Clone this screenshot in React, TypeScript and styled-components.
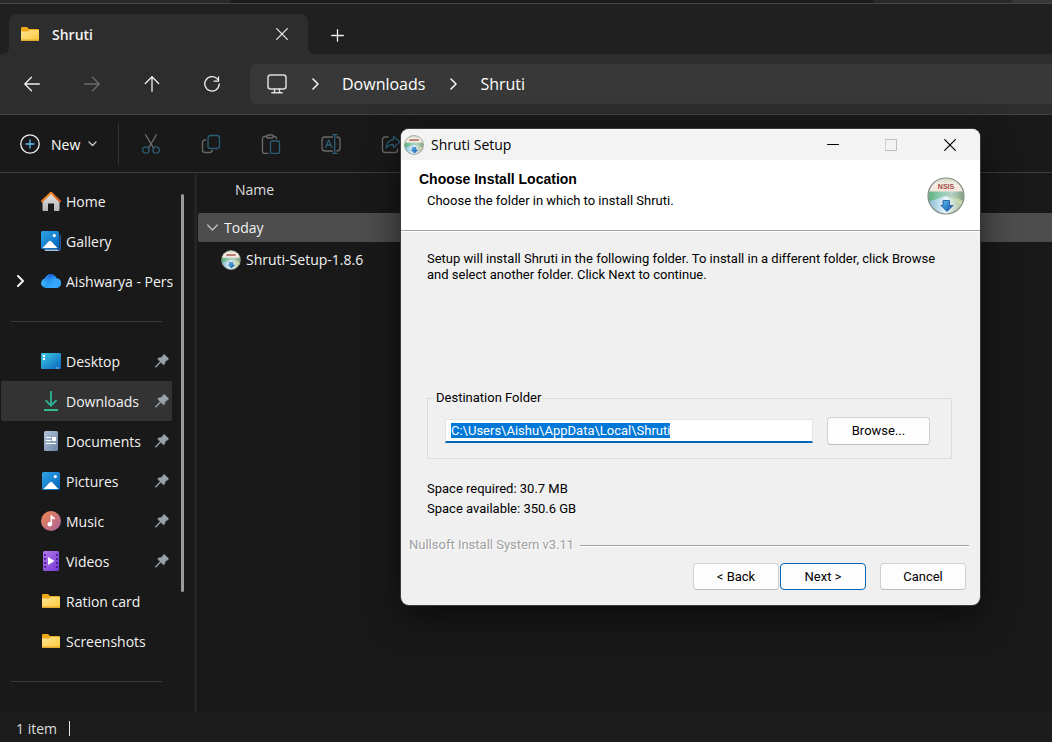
import { useEffect, useRef } from "react";
import type { ReactNode } from "react";
import styled, { createGlobalStyle, css } from "styled-components";

const uiFont = `"Open Sans", "Noto Sans", sans-serif`;
const dialogFont = `Roboto, "Noto Sans", sans-serif`;

const GlobalStyle = createGlobalStyle`
  *, *::before, *::after { box-sizing: border-box; }
  body {
    margin: 0;
    background: #191919;
    color: #f2f2f2;
    font: 14px/20px ${uiFont};
  }
  button, input { font: inherit; color: inherit; }
  svg { display: block; flex: none; }
`;

/* ---------- Explorer window ---------- */

const Explorer = styled.div`
  position: relative;
  display: flex;
  flex-direction: column;
  min-height: 100vh;
  overflow: hidden;
`;

const BackWindows = styled.div`
  display: flex;
  justify-content: space-between;
  height: 4px;
  background: #1b1b1b;
  border-bottom: 1px solid #444;
`;

const BackPane = styled.div<{ $share: number; $edge?: boolean }>`
  width: ${(p) => p.$share}%;
  background: #2a2a2a;
  border-right: ${(p) => (p.$edge ? "40px solid #383838" : "none")};
`;

const TabStrip = styled.div`
  display: flex;
  align-items: flex-end;
  height: 50px;
  padding-left: 9px;
  background: #202020;
`;

const Tab = styled.div`
  position: relative;
  display: flex;
  align-items: center;
  gap: 12px;
  width: 299px;
  height: 40px;
  padding: 0 18px 0 11px;
  border-radius: 8px 8px 0 0;
  background: #2d2d2d;
  font-weight: 600;

  &::before,
  &::after {
    content: "";
    position: absolute;
    bottom: 0;
    width: 6px;
    height: 6px;
  }
  &::before {
    right: 100%;
    background: radial-gradient(circle at 0 0, transparent 6px, #2d2d2d 6px);
  }
  &::after {
    left: 100%;
    background: radial-gradient(circle at 100% 0, transparent 6px, #2d2d2d 6px);
  }
`;

const TabTitle = styled.span`
  flex: 1;
  padding-top: 2px;
`;

const PlainButton = styled.button<{ $w: number; $h: number }>`
  display: flex;
  align-items: center;
  justify-content: center;
  flex: none;
  width: ${(p) => p.$w}px;
  height: ${(p) => p.$h}px;
  padding: 0;
  border: 0;
  background: none;
`;

const NavBar = styled.nav`
  display: flex;
  align-items: center;
  height: 61px;
  padding-left: 2px;
  background: #2d2d2d;
  border-bottom: 1px solid #414141;
`;

const AddressBar = styled.div`
  display: flex;
  align-items: center;
  flex: 1;
  height: 40px;
  margin-left: 8px;
  padding-left: 17px;
  border-radius: 6px 0 0 6px;
  background: #383838;
  font-size: 16px;
`;

const Crumb = styled.a`
  color: #fff;
  text-decoration: none;
`;

const CrumbArrow = styled.span`
  display: flex;
  justify-content: center;
  width: 55px;
`;

const CommandBar = styled.div`
  display: flex;
  align-items: center;
  height: 58px;
  padding-left: 20px;
  border-bottom: 1px solid #3c3c3c;
`;

const NewButton = styled.button`
  display: flex;
  align-items: center;
  height: 40px;
  padding: 0;
  border: 0;
  background: none;
  color: #fff;

  span {
    margin: 0 8px 0 11px;
    padding-top: 2px;
  }
`;

const ToolDivider = styled.span`
  width: 1px;
  height: 40px;
  margin: 0 2px 0 21px;
  background: #333;
`;

const Panes = styled.div`
  display: flex;
  flex: 1;
`;

const Sidebar = styled.nav`
  display: flex;
  flex: none;
  width: 197px;
  border-right: 3px solid #242424;
`;

const PlaceList = styled.ul`
  width: 172px;
  margin: 0;
  padding: 8px 0 11px 1px;
  list-style: none;
`;

const Place = styled.a<{ $active?: boolean }>`
  display: flex;
  align-items: center;
  height: 40px;
  padding-right: 3px;
  border-radius: 2px;
  background: ${(p) => (p.$active ? "#333" : "none")};
  color: #f2f2f2;
  text-decoration: none;
`;

const Expander = styled.span`
  display: flex;
  justify-content: center;
  flex: none;
  width: 38px;
  margin-right: 2px;
`;

const PlaceName = styled.span`
  flex: 1;
  margin-left: 5px;
  margin-right: -3px;
  padding-top: 2px;
  white-space: nowrap;
`;

const PlaceGap = styled.li`
  height: 40px;
  padding: 20px 10px 0;

  hr {
    margin: 0;
    border: 0;
    border-top: 1px solid #3a3a3a;
  }
`;

const ScrollThumb = styled.div`
  width: 3px;
  height: 398px;
  margin: 21px 0 0 9px;
  border-radius: 2px;
  background: #9a9a9a;
`;

const FileArea = styled.main`
  flex: 1;
  padding-left: 1px;
`;

const FileTable = styled.table`
  width: 100%;
  border-collapse: collapse;

  th,
  td {
    padding: 0;
    text-align: left;
    font-weight: 400;
  }
`;

const HeadCell = styled.th`
  height: 40px;
  color: #dedede;

  span {
    display: block;
    padding: 0 0 6px 37px;
  }
`;

const GroupCell = styled.th`
  height: 29px;
  border-radius: 2px 0 0 2px;
  background: #4d4d4d;
`;

const CellRow = styled.div<{ $indent: number; $gap: number; $height: number }>`
  display: flex;
  align-items: center;
  gap: ${(p) => p.$gap}px;
  height: ${(p) => p.$height}px;
  padding-left: ${(p) => p.$indent}px;
`;

const StatusBar = styled.footer`
  display: flex;
  align-items: center;
  gap: 12px;
  height: 29px;
  padding: 2px 0 0 16px;
  background: #1c1c1c;
  color: #dedede;

  &::after {
    content: "";
    width: 1px;
    height: 15px;
    background: #e6e6e6;
  }
`;

/* ---------- Installer window ---------- */

const SetupWindow = styled.section`
  position: absolute;
  top: 129px;
  left: 401px;
  width: 579px;
  border-radius: 8px;
  overflow: hidden;
  background: #f0f0f0;
  box-shadow: 0 0 0 1px #3a3a3a, 0 12px 36px rgba(0, 0, 0, 0.6);
  color: #000;
  font: 13px/16px ${dialogFont};
`;

const TitleBar = styled.header`
  display: flex;
  align-items: center;
  height: 31px;
  padding-left: 3px;
  background: #f3f3f3;
  font: 14px/20px ${uiFont};
`;

const WindowTitle = styled.span`
  flex: 1;
  margin-left: 7px;
`;

const StepHeader = styled.div`
  display: flex;
  justify-content: space-between;
  align-items: flex-start;
  height: 71px;
  padding: 11px 15px 0 18px;
  background: #fff;
  border-bottom: 1px solid #a0a0a0;
`;

const StepTitle = styled.h1`
  margin: 0 0 6px;
  font: bold 14px/16px "Liberation Sans", Arial, sans-serif;
`;

const StepSubtitle = styled.p`
  margin: 0 0 0 8px;
`;

const LogoSlot = styled.div`
  padding-top: 6px;
`;

const StepBody = styled.div`
  padding: 19px 28px 0 26px;
  border-top: 1px solid #fff;
`;

const Intro = styled.p`
  height: 139px;
  margin: 0;
`;

const FolderGroup = styled.fieldset`
  display: flex;
  align-items: center;
  gap: 14px;
  min-width: 0;
  height: 69px;
  margin: 0 0 22px;
  padding: 0 21px 2px 17px;
  border: 1px solid #dcdcdc;

  legend {
    margin-left: -11px;
    padding: 0 2px;
  }
`;

const PathInput = styled.input`
  flex: 1;
  min-width: 0;
  height: 24px;
  padding: 0 5px;
  border: 1px solid #e5e5e5;
  border-bottom: 2px solid #0067b8;
  border-radius: 0;
  outline: none;
  background: #fff;
  line-height: 16px;

  &::selection {
    background: #0078d7;
    color: #fff;
  }
`;

const PushButton = styled.button<{ $wide?: boolean; $primary?: boolean }>`
  width: ${(p) => (p.$wide ? 103 : 86)}px;
  height: ${(p) => (p.$wide ? 28 : 27)}px;
  padding: 0;
  border: 1px solid #d0d0d0;
  border-bottom-color: #bcbcbc;
  border-radius: 4px;
  background: #fdfdfd;
  ${(p) =>
    p.$primary &&
    css`
      border-color: #0067b8;
    `}
`;

const SpaceLine = styled.p`
  margin: 0 0 4px;
`;

const Brand = styled.div`
  display: flex;
  align-items: center;
  gap: 6px;
  margin-top: 20px;
  padding: 0 11px 0 8px;
  color: #a0a0a0;
  text-shadow: 1px 1px 0 #fff;

  &::after {
    content: "";
    flex: 1;
    height: 2px;
    margin-top: 2px;
    border-top: 1px solid #a0a0a0;
    border-bottom: 1px solid #fff;
  }
`;

const ButtonRow = styled.div`
  display: flex;
  justify-content: flex-end;
  gap: 1px;
  padding: 10px 14px 15px;

  button:last-child {
    margin-left: 13px;
  }
`;

/* ---------- Icons ---------- */

type StrokeProps = { w: number; h: number; color?: string; width?: number; children: ReactNode };

const Stroke = ({ w, h, color = "#f0f0f0", width = 1.3, children }: StrokeProps) => (
  <svg
    width={w}
    height={h}
    viewBox={`0 0 ${w} ${h}`}
    fill="none"
    stroke={color}
    strokeWidth={width}
    strokeLinecap="round"
    strokeLinejoin="round"
    aria-hidden="true"
  >
    {children}
  </svg>
);

const FolderIcon = () => (
  <svg width="20" height="20" viewBox="0 0 20 20" aria-hidden="true">
    <defs>
      <linearGradient id="folder" x1="0" y1="0" x2="1" y2="1">
        <stop offset="0" stopColor="#ffe398" />
        <stop offset="1" stopColor="#fcc934" />
      </linearGradient>
    </defs>
    <path d="M1 4a1 1 0 0 1 1-1h5l2 2h9a1 1 0 0 1 1 1v3H1z" fill="#eca91b" />
    <path d="M1 7.500h7l1.500-1.500H19v10a1 1 0 0 1-1 1H2a1 1 0 0 1-1-1z" fill="url(#folder)" />
    <path d="M1 15.500v.5a1 1 0 0 0 1 1h16a1 1 0 0 0 1-1v-.5z" fill="#e3a92c" />
  </svg>
);

const HomeIcon = () => (
  <svg width="20" height="20" viewBox="0 0 20 20" aria-hidden="true">
    <defs>
      <linearGradient id="wall" x1="0" y1="0" x2="0" y2="1">
        <stop offset="0" stopColor="#e4e4e4" />
        <stop offset="1" stopColor="#b4b4b4" />
      </linearGradient>
      <linearGradient id="roof" x1="0" y1="0" x2="1" y2="1">
        <stop offset="0" stopColor="#f6a02c" />
        <stop offset="1" stopColor="#d8501c" />
      </linearGradient>
    </defs>
    <path d="M1.500 9.500 10 2l8.500 7.500V19a1 1 0 0 1-1 1H13v-7.500H7V20H2.500a1 1 0 0 1-1-1z" fill="url(#wall)" />
    <path d="M1 10.200 10 1.800l9 8.400" fill="none" stroke="url(#roof)" strokeWidth="2.200" strokeLinecap="round" strokeLinejoin="round" />
  </svg>
);

const PictureShape = () => (
  <>
    <rect x="1" y="1" width="18" height="18" rx="1.500" fill="url(#photo)" />
    <circle cx="14.300" cy="5.600" r="1.600" fill="#fff" />
    <path d="m2.500 18 6.200-6.600a1.800 1.800 0 0 1 2.600 0l6.200 6.600z" fill="#fff" />
  </>
);

const PhotoGradient = () => (
  <defs>
    <linearGradient id="photo" x1="0" y1="0" x2="1" y2="1">
      <stop offset="0" stopColor="#2fa4e7" />
      <stop offset="1" stopColor="#0463b8" />
    </linearGradient>
  </defs>
);

const PicturesIcon = () => (
  <svg width="20" height="20" viewBox="0 0 20 20" aria-hidden="true">
    <PhotoGradient />
    <PictureShape />
  </svg>
);

const GalleryIcon = () => (
  <svg width="20" height="20" viewBox="0 0 20 20" aria-hidden="true">
    <PhotoGradient />
    <path d="M18.500 3.500a1.500 1.500 0 0 1 1.500 1.500v12.500a2.500 2.500 0 0 1-2.500 2.500H5a1.500 1.500 0 0 1-1.500-1.500h13a2 2 0 0 0 2-2z" fill="#2a5b9c" />
    <path d="M3.500 18.500h13l1.500 1.500H5a1.500 1.500 0 0 1-1.500-1.500" fill="#9cc3ec" />
    <svg x="-1" y="-1" width="20" height="20" viewBox="0 0 20 20">
      <PictureShape />
    </svg>
  </svg>
);

const CloudIcon = () => (
  <svg width="20" height="20" viewBox="0 0 20 20" aria-hidden="true">
    <defs>
      <linearGradient id="cloudBase" x1="0" y1="0" x2="1" y2="1">
        <stop offset="0" stopColor="#1a6fe8" />
        <stop offset="1" stopColor="#38c5ff" />
      </linearGradient>
      <linearGradient id="cloudBack" x1="0" y1="1" x2="1" y2="0">
        <stop offset="0" stopColor="#3fc0ff" />
        <stop offset="1" stopColor="#1257d6" />
      </linearGradient>
    </defs>
    <path d="M5 17A4.800 4.800 0 0 1 .2 12.200C.2 9.700 2 8 4 7.500 5 4.700 7.200 3.200 9.800 3.200c3 0 5 1.700 5.800 4 2.500.3 4.400 2.300 4.400 4.900A4.800 4.800 0 0 1 15.200 17z" fill="url(#cloudBase)" />
    <path d="M.8 14.500C-.6 11 1.500 8 4 7.500 5 4.700 7.200 3.200 9.800 3.200c2 0 3.600.8 4.600 2-4 .3-5.200 2.600-7 5.600-1.300 2.200-3.500 4.200-6.600 3.700" fill="url(#cloudBack)" />
    <path d="M6.500 17c3.500-.6 4.400-3.200 5.600-5.700 1-2.200 2.500-3.700 4.800-3.900 2 .8 3.100 2.600 3.100 4.700A4.800 4.800 0 0 1 15.200 17z" fill="#38a5fb" opacity=".85" />
  </svg>
);

const DesktopIcon = () => (
  <svg width="20" height="20" viewBox="0 0 20 20" aria-hidden="true">
    <defs>
      <linearGradient id="desk" x1="0" y1="0" x2="1" y2="1">
        <stop offset="0" stopColor="#3ccbe0" />
        <stop offset="1" stopColor="#0a63c0" />
      </linearGradient>
    </defs>
    <rect x="0" y="2" width="20" height="16" rx="1.200" fill="url(#desk)" />
    <path d="M2 4h2v2H2zM2 7h2v2H2z" fill="#fff" />
    <path d="M15 16.500h1v1h-1zM17 16.500h1v1h-1z" fill="#cfe7ff" />
  </svg>
);

const DownloadIcon = () => (
  <svg width="20" height="20" viewBox="0 0 20 20" fill="none" aria-hidden="true">
    <path d="M10 0v14.500M4.500 9.200l5.500 5.500 5.500-5.500" stroke="#2bb596" strokeWidth="1.800" />
    <path d="M3 19h14" stroke="#35b98e" strokeWidth="2" />
  </svg>
);

const DocumentIcon = () => (
  <svg width="20" height="20" viewBox="0 0 20 20" aria-hidden="true">
    <defs>
      <linearGradient id="doc" x1="0" y1="0" x2="1" y2="1">
        <stop offset="0" stopColor="#b3c5da" />
        <stop offset="1" stopColor="#6c86a6" />
      </linearGradient>
    </defs>
    <rect x="3" y="0" width="14" height="20" rx="1.500" fill="url(#doc)" />
    <path d="M5 6.500h5M5 9.500h5M5 12.500h10" stroke="#fff" strokeWidth="1.200" />
    <path d="M11 6h4v4h-4z" fill="#fff" />
  </svg>
);

const MusicIcon = () => (
  <svg width="20" height="20" viewBox="0 0 20 20" aria-hidden="true">
    <defs>
      <linearGradient id="music" x1="0" y1="0" x2="1" y2="1">
        <stop offset="0" stopColor="#f08a4c" />
        <stop offset="1" stopColor="#a9609f" />
      </linearGradient>
    </defs>
    <circle cx="10" cy="10" r="10" fill="url(#music)" />
    <circle cx="8.800" cy="13.300" r="2.300" fill="#fff" />
    <path d="M9.600 13.300V4.200h1.500c.3 1.500 1.200 2 2.600 2.200v2c-1.200 0-2-.3-2.600-.8v5.700z" fill="#fff" />
  </svg>
);

const VideoIcon = () => (
  <svg width="20" height="20" viewBox="0 0 20 20" aria-hidden="true">
    <defs>
      <linearGradient id="video" x1="0" y1="0" x2="1" y2="1">
        <stop offset="0" stopColor="#b57be8" />
        <stop offset="1" stopColor="#7537d8" />
      </linearGradient>
    </defs>
    <rect x="2" y="0" width="16" height="20" rx="1.500" fill="url(#video)" />
    <path d="M4 3v15M16 3v15" stroke="#3b1a86" strokeWidth="1.800" strokeDasharray="1.800 2.200" />
    <path d="M7 6v8l6.500-4z" fill="#fff" />
  </svg>
);

const PinIcon = () => (
  <svg width="14" height="14" viewBox="0 0 14 14" aria-hidden="true">
    <path
      d="M8.400.9c.4-.4 1-.4 1.300 0l3.500 3.400c.4.400.4 1-.1 1.300L10.300 7.200l-.8 2.900c-.2.600-.9.800-1.300.4L5.900 8.300 1.300 13l-.9.200.2-.9 4.600-4.700L3.100 5.400c-.4-.4-.2-1.100.4-1.300l3.100-.7z"
      fill="#98a2ab"
      stroke="#98a2ab"
      strokeWidth=".6"
    />
  </svg>
);

const DiscIcon = ({ size }: { size: number }) => (
  <svg width={size} height={size} viewBox="0 0 38 38" aria-hidden="true">
    <defs>
      <linearGradient id="disc" x1="0" y1="0" x2="1" y2="0">
        <stop offset="0" stopColor="#58aa78" />
        <stop offset=".35" stopColor="#8fcdb4" />
        <stop offset=".65" stopColor="#b5d3c6" />
        <stop offset="1" stopColor="#7f9a76" />
      </linearGradient>
      <linearGradient id="discLow" x1="0" y1="0" x2="1" y2="0">
        <stop offset="0" stopColor="#7cb6cf" />
        <stop offset=".5" stopColor="#eaf6fd" />
        <stop offset="1" stopColor="#a4b98d" />
      </linearGradient>
      <linearGradient id="discTop" x1="0" y1="0" x2="0" y2="1">
        <stop offset="0" stopColor="#c9d3b8" />
        <stop offset=".5" stopColor="#f6efe6" />
        <stop offset="1" stopColor="#f3e3da" />
      </linearGradient>
      <linearGradient id="arrow" x1="0" y1="0" x2="1" y2="1">
        <stop offset="0" stopColor="#5cc4f5" />
        <stop offset="1" stopColor="#0b4fa6" />
      </linearGradient>
      <clipPath id="discEdge">
        <circle cx="19" cy="19" r="18" />
      </clipPath>
    </defs>
    <g clipPath="url(#discEdge)">
      <rect width="38" height="38" fill="url(#disc)" />
      <path d="M0 0h38v14.500H0z" fill="url(#discTop)" />
      <path d="M0 25 19 19l19 7v12H0z" fill="url(#discLow)" />
      <path d="M24 19 38 24v8z" fill="#cfe0a8" opacity=".7" />
    </g>
    {size > 24 ? (
      <text x="19" y="12" textAnchor="middle" fontFamily="Liberation Sans, sans-serif" fontSize="7" fontWeight="700" fill="#a04a44">
        NSIS
      </text>
    ) : (
      <path d="M10 9.500h18" stroke="#a8625a" strokeWidth="3" />
    )}
    <path d="M16 23.500h6.500v5H26L20 34.500l-6-6h2z" fill="url(#arrow)" stroke="#1c4f94" strokeWidth=".8" />
    <circle cx="19" cy="19" r="18" fill="none" stroke="#8b8f8a" strokeWidth="1.200" />
  </svg>
);

const ChevronRight = ({ size = 12, width = 1.6 }: { size?: number; width?: number }) => (
  <Stroke w={size} h={size} width={width}>
    <path d={`M${size / 2 - 2} ${size / 2 - 5}l5 5-5 5`} />
  </Stroke>
);

const CloseGlyph = ({ size, color }: { size: number; color: string }) => (
  <Stroke w={size} h={size} color={color} width={1.2}>
    <path d={`M.7.7l${size - 1.4} ${size - 1.4}M${size - 0.7}.7L.7 ${size - 0.7}`} />
  </Stroke>
);

const gray = "#6a6a6a";
const teal = "#2b5d75";

const CutIcon = () => (
  <Stroke w={20} h={20} color={gray}>
    <path d="M4.500.7l8.200 13.600M15.500.7 7.300 14.300" />
    <g stroke={teal}>
      <circle cx="4.800" cy="16" r="3.200" />
      <circle cx="15.200" cy="16" r="3.200" />
    </g>
  </Stroke>
);

const CopyIcon = () => (
  <Stroke w={20} h={20} color={gray}>
    <path d="M4.500 6H4a2.500 2.500 0 0 0-2.500 2.500V16A2.500 2.500 0 0 0 4 18.500h5a2.500 2.500 0 0 0 2.400-2" />
    <rect x="7" y="1.500" width="11.500" height="13" rx="2.500" stroke={teal} />
  </Stroke>
);

const PasteIcon = () => (
  <Stroke w={20} h={20} color={gray}>
    <path d="M6 2.500H3.500a2 2 0 0 0-2 2v13a2 2 0 0 0 2 2H7M12 2.500h1.500a2 2 0 0 1 2 2" />
    <rect x="5.500" y="1" width="7" height="3" rx="1.500" />
    <rect x="9.500" y="7" width="9" height="12.500" rx="1.500" stroke={teal} />
  </Stroke>
);

const RenameIcon = () => (
  <Stroke w={20} h={20} color={gray}>
    <path d="M11.500 3H4a3 3 0 0 0-3 3v8a3 3 0 0 0 3 3h7.500M16 3a3 3 0 0 1 3 3v8a3 3 0 0 1-3 3" />
    <g stroke={teal}>
      <path d="M4.500 13.500 7.700 6l3.200 7.500M5.600 11h4.200M11.500.7h4.500M13.700.7v18.600M11.500 19.300h4.500" />
    </g>
  </Stroke>
);

const ShareIcon = () => (
  <Stroke w={20} h={20} color={gray}>
    <path d="M7 3H4a2.500 2.500 0 0 0-2.500 2.500V16A2.500 2.500 0 0 0 4 18.500h10a2.500 2.500 0 0 0 2.500-2.500v-1" />
    <path d="M12.500 2.500 19 8l-6.500 5.500v-3C9 10.500 7 11.500 5 14c.5-4.500 3-8 7.500-8.300z" stroke={teal} />
  </Stroke>
);

/* ---------- Data ---------- */

type PlaceItem = { name: string; icon: ReactNode; pinned?: boolean; active?: boolean; expandable?: boolean };

const places: (PlaceItem | null)[] = [
  { name: "Home", icon: <HomeIcon /> },
  { name: "Gallery", icon: <GalleryIcon /> },
  { name: "Aishwarya - Pers", icon: <CloudIcon />, expandable: true },
  null,
  { name: "Desktop", icon: <DesktopIcon />, pinned: true },
  { name: "Downloads", icon: <DownloadIcon />, pinned: true, active: true },
  { name: "Documents", icon: <DocumentIcon />, pinned: true },
  { name: "Pictures", icon: <PicturesIcon />, pinned: true },
  { name: "Music", icon: <MusicIcon />, pinned: true },
  { name: "Videos", icon: <VideoIcon />, pinned: true },
  { name: "Ration card", icon: <FolderIcon /> },
  { name: "Screenshots", icon: <FolderIcon /> },
  null,
];

const tools = [
  { label: "Cut", icon: <CutIcon /> },
  { label: "Copy", icon: <CopyIcon /> },
  { label: "Paste", icon: <PasteIcon /> },
  { label: "Rename", icon: <RenameIcon /> },
  { label: "Share", icon: <ShareIcon /> },
];

/* ---------- Views ---------- */

const SetupDialog = () => {
  const path = useRef<HTMLInputElement>(null);

  useEffect(() => {
    path.current?.focus();
    path.current?.select();
  }, []);

  return (
    <SetupWindow role="dialog" aria-label="Shruti Setup">
      <TitleBar>
        <DiscIcon size={20} />
        <WindowTitle>Shruti Setup</WindowTitle>
        <PlainButton $w={58} $h={31} aria-label="Minimize">
          <Stroke w={12} h={12} color="#000" width={1}>
            <path d="M.5 5.500h11" />
          </Stroke>
        </PlainButton>
        <PlainButton $w={58} $h={31} aria-label="Maximize" disabled>
          <Stroke w={12} h={12} color="#bdbdbd" width={1}>
            <rect x=".5" y=".5" width="11" height="11" />
          </Stroke>
        </PlainButton>
        <PlainButton $w={60} $h={31} aria-label="Close">
          <CloseGlyph size={12} color="#000" />
        </PlainButton>
      </TitleBar>
      <StepHeader>
        <div>
          <StepTitle>Choose Install Location</StepTitle>
          <StepSubtitle>Choose the folder in which to install Shruti.</StepSubtitle>
        </div>
        <LogoSlot>
          <DiscIcon size={38} />
        </LogoSlot>
      </StepHeader>
      <StepBody>
        <Intro>
          Setup will install Shruti in the following folder. To install in a different folder, click Browse
          and select another folder. Click Next to continue.
        </Intro>
        <FolderGroup>
          <legend>Destination Folder</legend>
          <PathInput
            ref={path}
            aria-label="Destination Folder"
            defaultValue="C:\Users\Aishu\AppData\Local\Shruti"
            spellCheck={false}
          />
          <PushButton $wide>Browse...</PushButton>
        </FolderGroup>
        <SpaceLine>Space required: 30.7 MB</SpaceLine>
        <SpaceLine>Space available: 350.6 GB</SpaceLine>
      </StepBody>
      <Brand>Nullsoft Install System v3.11</Brand>
      <ButtonRow>
        <PushButton>&lt; Back</PushButton>
        <PushButton $primary>Next &gt;</PushButton>
        <PushButton>Cancel</PushButton>
      </ButtonRow>
    </SetupWindow>
  );
};

export default function App() {
  return (
    <>
      <GlobalStyle />
      <Explorer>
        <BackWindows>
          <BackPane $share={22} />
          <BackPane $share={17} $edge />
        </BackWindows>
        <TabStrip>
          <Tab>
            <FolderIcon />
            <TabTitle>Shruti</TabTitle>
            <PlainButton $w={16} $h={24} aria-label="Close tab">
              <CloseGlyph size={12} color="#f0f0f0" />
            </PlainButton>
          </Tab>
          <PlainButton $w={58} $h={38} aria-label="New tab">
            <Stroke w={13} h={13}>
              <path d="M6.500.7v11.600M.7 6.500h11.600" />
            </Stroke>
          </PlainButton>
        </TabStrip>
        <NavBar aria-label="Navigation">
          <PlainButton $w={60} $h={40} aria-label="Back">
            <Stroke w={16} h={16}>
              <path d="M15.300 8H1M7.500 1.300.8 8l6.700 6.700" />
            </Stroke>
          </PlainButton>
          <PlainButton $w={60} $h={40} aria-label="Forward" disabled>
            <Stroke w={16} h={16} color="#6c6c6c">
              <path d="M.7 8H15M8.500 1.300 15.200 8l-6.700 6.700" />
            </Stroke>
          </PlainButton>
          <PlainButton $w={60} $h={40} aria-label="Up">
            <Stroke w={16} h={16}>
              <path d="M8 15.300V1M1.300 7.500 8 .8l6.700 6.700" />
            </Stroke>
          </PlainButton>
          <PlainButton $w={60} $h={40} aria-label="Refresh">
            <Stroke w={16} h={16}>
              <path d="M13.500 3.200A7.200 7.200 0 1 0 15.200 8M14.500.8v4.400h-4.400" />
            </Stroke>
          </PlainButton>
          <AddressBar>
            <Stroke w={20} h={20} color="#dcdcdc" width={1.5}>
              <rect x="1" y="1" width="18" height="14" rx="2.500" />
              <path d="M7.500 15v3.500M12.500 15v3.500M4.800 18.800h10.400" />
            </Stroke>
            <CrumbArrow>
              <ChevronRight />
            </CrumbArrow>
            <Crumb href="#downloads">Downloads</Crumb>
            <CrumbArrow>
              <ChevronRight />
            </CrumbArrow>
            <Crumb href="#shruti">Shruti</Crumb>
          </AddressBar>
        </NavBar>
        <CommandBar>
          <NewButton>
            <Stroke w={20} h={20}>
              <circle cx="10" cy="10" r="9.200" />
              <path d="M10 6v8M6 10h8" stroke="#5cc0f5" />
            </Stroke>
            <span>New</span>
            <Stroke w={9} h={9} color="#c8c8c8">
              <path d="M1 3l3.500 3.500L8 3" />
            </Stroke>
          </NewButton>
          <ToolDivider />
          {tools.map((tool) => (
            <PlainButton key={tool.label} $w={60} $h={40} aria-label={tool.label} disabled>
              {tool.icon}
            </PlainButton>
          ))}
        </CommandBar>
        <Panes>
          <Sidebar aria-label="Places">
            <PlaceList>
              {places.map((place, index) =>
                place ? (
                  <li key={place.name}>
                    <Place href="#place" $active={place.active}>
                      <Expander>{place.expandable && <ChevronRight width={2} />}</Expander>
                      {place.icon}
                      <PlaceName>{place.name}</PlaceName>
                      {place.pinned && <PinIcon />}
                    </Place>
                  </li>
                ) : (
                  <PlaceGap key={index}>
                    <hr />
                  </PlaceGap>
                )
              )}
            </PlaceList>
            <ScrollThumb />
          </Sidebar>
          <FileArea>
            <FileTable>
              <thead>
                <tr>
                  <HeadCell scope="col">
                    <span>Name</span>
                  </HeadCell>
                </tr>
              </thead>
              <tbody>
                <tr>
                  <GroupCell scope="rowgroup">
                    <CellRow $indent={9} $gap={6} $height={28}>
                      <Stroke w={11} h={11} color="#c0c0c0">
                        <path d="M.7 3l4.800 5 4.800-5" />
                      </Stroke>
                      Today
                    </CellRow>
                  </GroupCell>
                </tr>
                <tr>
                  <td>
                    <CellRow $indent={23} $gap={5} $height={35}>
                      <DiscIcon size={20} />
                      Shruti-Setup-1.8.6
                    </CellRow>
                  </td>
                </tr>
              </tbody>
            </FileTable>
          </FileArea>
        </Panes>
        <StatusBar>1 item</StatusBar>
        <SetupDialog />
      </Explorer>
    </>
  );
}
